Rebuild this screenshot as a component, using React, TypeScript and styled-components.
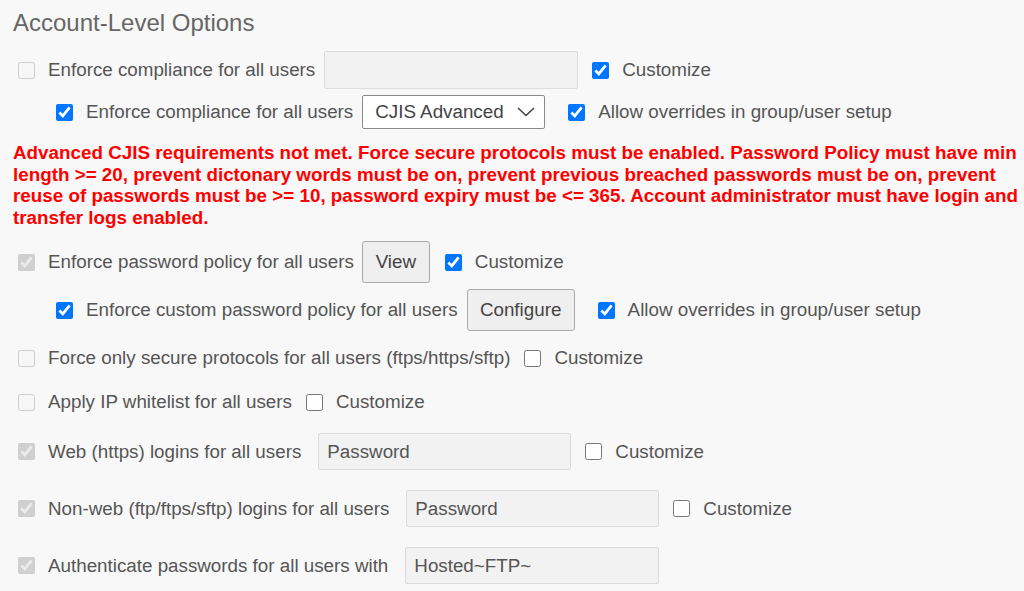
import React from "react";
import styled, { createGlobalStyle } from "styled-components";

const GlobalStyle = createGlobalStyle`
  html, body {
    margin: 0;
    padding: 0;
    background: #f8f8f8;
  }
  body {
    font-family: "Liberation Sans", Arial, sans-serif;
    color: #555;
  }
`;

const Page = styled.div`
  display: flex;
  flex-direction: column;
  padding: 9px 0 0 13px;
  width: 1024px;
  box-sizing: border-box;
  height: 591px;
  overflow: hidden;
`;

const Heading = styled.h2`
  margin: 0;
  font-size: 24px;
  font-weight: normal;
  line-height: 27px;
  color: #666;
`;

const Row = styled.div<{ $h: number; $mt: number; $indent?: boolean }>`
  display: flex;
  align-items: center;
  height: ${(p) => p.$h}px;
  margin-top: ${(p) => p.$mt}px;
  padding-left: ${(p) => (p.$indent ? 43 : 5)}px;
  font-size: 18.8px;
  white-space: nowrap;
`;

const Check = styled.input.attrs({ type: "checkbox" })`
  width: 17px;
  height: 17px;
  margin: 0 13px 0 0;
  flex: none;
`;

const Label = styled.span<{ $gap?: number }>`
  margin-right: ${(p) => p.$gap ?? 9}px;
`;

const Spacer = styled.span<{ $w: number }>`
  width: ${(p) => p.$w}px;
  flex: none;
`;

const TextBox = styled.div<{ $w: number; $h: number }>`
  display: flex;
  align-items: center;
  box-sizing: border-box;
  width: ${(p) => p.$w}px;
  height: ${(p) => p.$h}px;
  padding: 0 8px;
  background: #f2f2f2;
  border: 1px solid #dcdcdc;
  border-radius: 2px;
  color: #555;
  flex: none;
`;

const Select = styled.div`
  display: flex;
  align-items: center;
  justify-content: space-between;
  box-sizing: border-box;
  width: 183px;
  height: 34px;
  padding: 0 9px 0 12px;
  background: #fff;
  border: 1px solid #8a8a8a;
  border-radius: 2px;
  color: #444;
  flex: none;
`;

const Button = styled.div<{ $w: number }>`
  display: flex;
  align-items: center;
  justify-content: center;
  box-sizing: border-box;
  width: ${(p) => p.$w}px;
  height: 42px;
  background: #efefef;
  border: 1px solid #a9a9a9;
  border-radius: 3px;
  color: #444;
  flex: none;
`;

const Warning = styled.p`
  margin: 13px 0 0 0;
  color: #ff0000;
  font-weight: bold;
  font-size: 18.82px;
  line-height: 21.5px;
`;

const Chevron = () => (
  <svg width="18" height="10" viewBox="0 0 18 10">
    <path d="M1 1 L9 8.5 L17 1" fill="none" stroke="#444" strokeWidth="1.6" />
  </svg>
);

export default function App() {
  return (
    <>
      <GlobalStyle />
      <Page>
        <Heading>Account-Level Options</Heading>

        <Row $h={38} $mt={15}>
          <Check disabled />
          <Label>Enforce compliance for all users</Label>
          <TextBox $w={254} $h={38} />
          <Spacer $w={14} />
          <Check defaultChecked />
          <span>Customize</span>
        </Row>

        <Row $h={34} $mt={6} $indent>
          <Check defaultChecked />
          <Label>Enforce compliance for all users</Label>
          <Select>
            <span>CJIS Advanced</span>
            <Chevron />
          </Select>
          <Spacer $w={23} />
          <Check defaultChecked />
          <span>Allow overrides in group/user setup</span>
        </Row>

        <Warning>
          Advanced CJIS requirements not met. Force secure protocols must be enabled. Password Policy must have min
          length &gt;= 20, prevent dictonary words must be on, prevent previous breached passwords must be on, prevent
          reuse of passwords must be &gt;= 10, password expiry must be &lt;= 365. Account administrator must have login and
          transfer logs enabled.
        </Warning>

        <Row $h={42} $mt={13}>
          <Check disabled defaultChecked />
          <Label $gap={8}>Enforce password policy for all users</Label>
          <Button $w={68}>View</Button>
          <Spacer $w={15} />
          <Check defaultChecked />
          <span>Customize</span>
        </Row>

        <Row $h={42} $mt={6} $indent>
          <Check defaultChecked />
          <Label>Enforce custom password policy for all users</Label>
          <Button $w={108}>Configure</Button>
          <Spacer $w={23} />
          <Check defaultChecked />
          <span>Allow overrides in group/user setup</span>
        </Row>

        <Row $h={38} $mt={8}>
          <Check disabled />
          <Label $gap={14}>Force only secure protocols for all users (ftps/https/sftp)</Label>
          <Check />
          <span>Customize</span>
        </Row>

        <Row $h={38} $mt={6}>
          <Check disabled />
          <Label $gap={14}>Apply IP whitelist for all users</Label>
          <Check />
          <span>Customize</span>
        </Row>

        <Row $h={37} $mt={12}>
          <Check disabled defaultChecked />
          <Label $gap={17}>Web (https) logins for all users</Label>
          <TextBox $w={253} $h={37}>Password</TextBox>
          <Spacer $w={14} />
          <Check />
          <span>Customize</span>
        </Row>

        <Row $h={37} $mt={20}>
          <Check disabled defaultChecked />
          <Label $gap={17}>Non-web (ftp/ftps/sftp) logins for all users</Label>
          <TextBox $w={253} $h={37}>Password</TextBox>
          <Spacer $w={14} />
          <Check />
          <span>Customize</span>
        </Row>

        <Row $h={37} $mt={20}>
          <Check disabled defaultChecked />
          <Label $gap={17}>Authenticate passwords for all users with</Label>
          <TextBox $w={254} $h={37}>Hosted~FTP~</TextBox>
        </Row>
      </Page>
    </>
  );
}
